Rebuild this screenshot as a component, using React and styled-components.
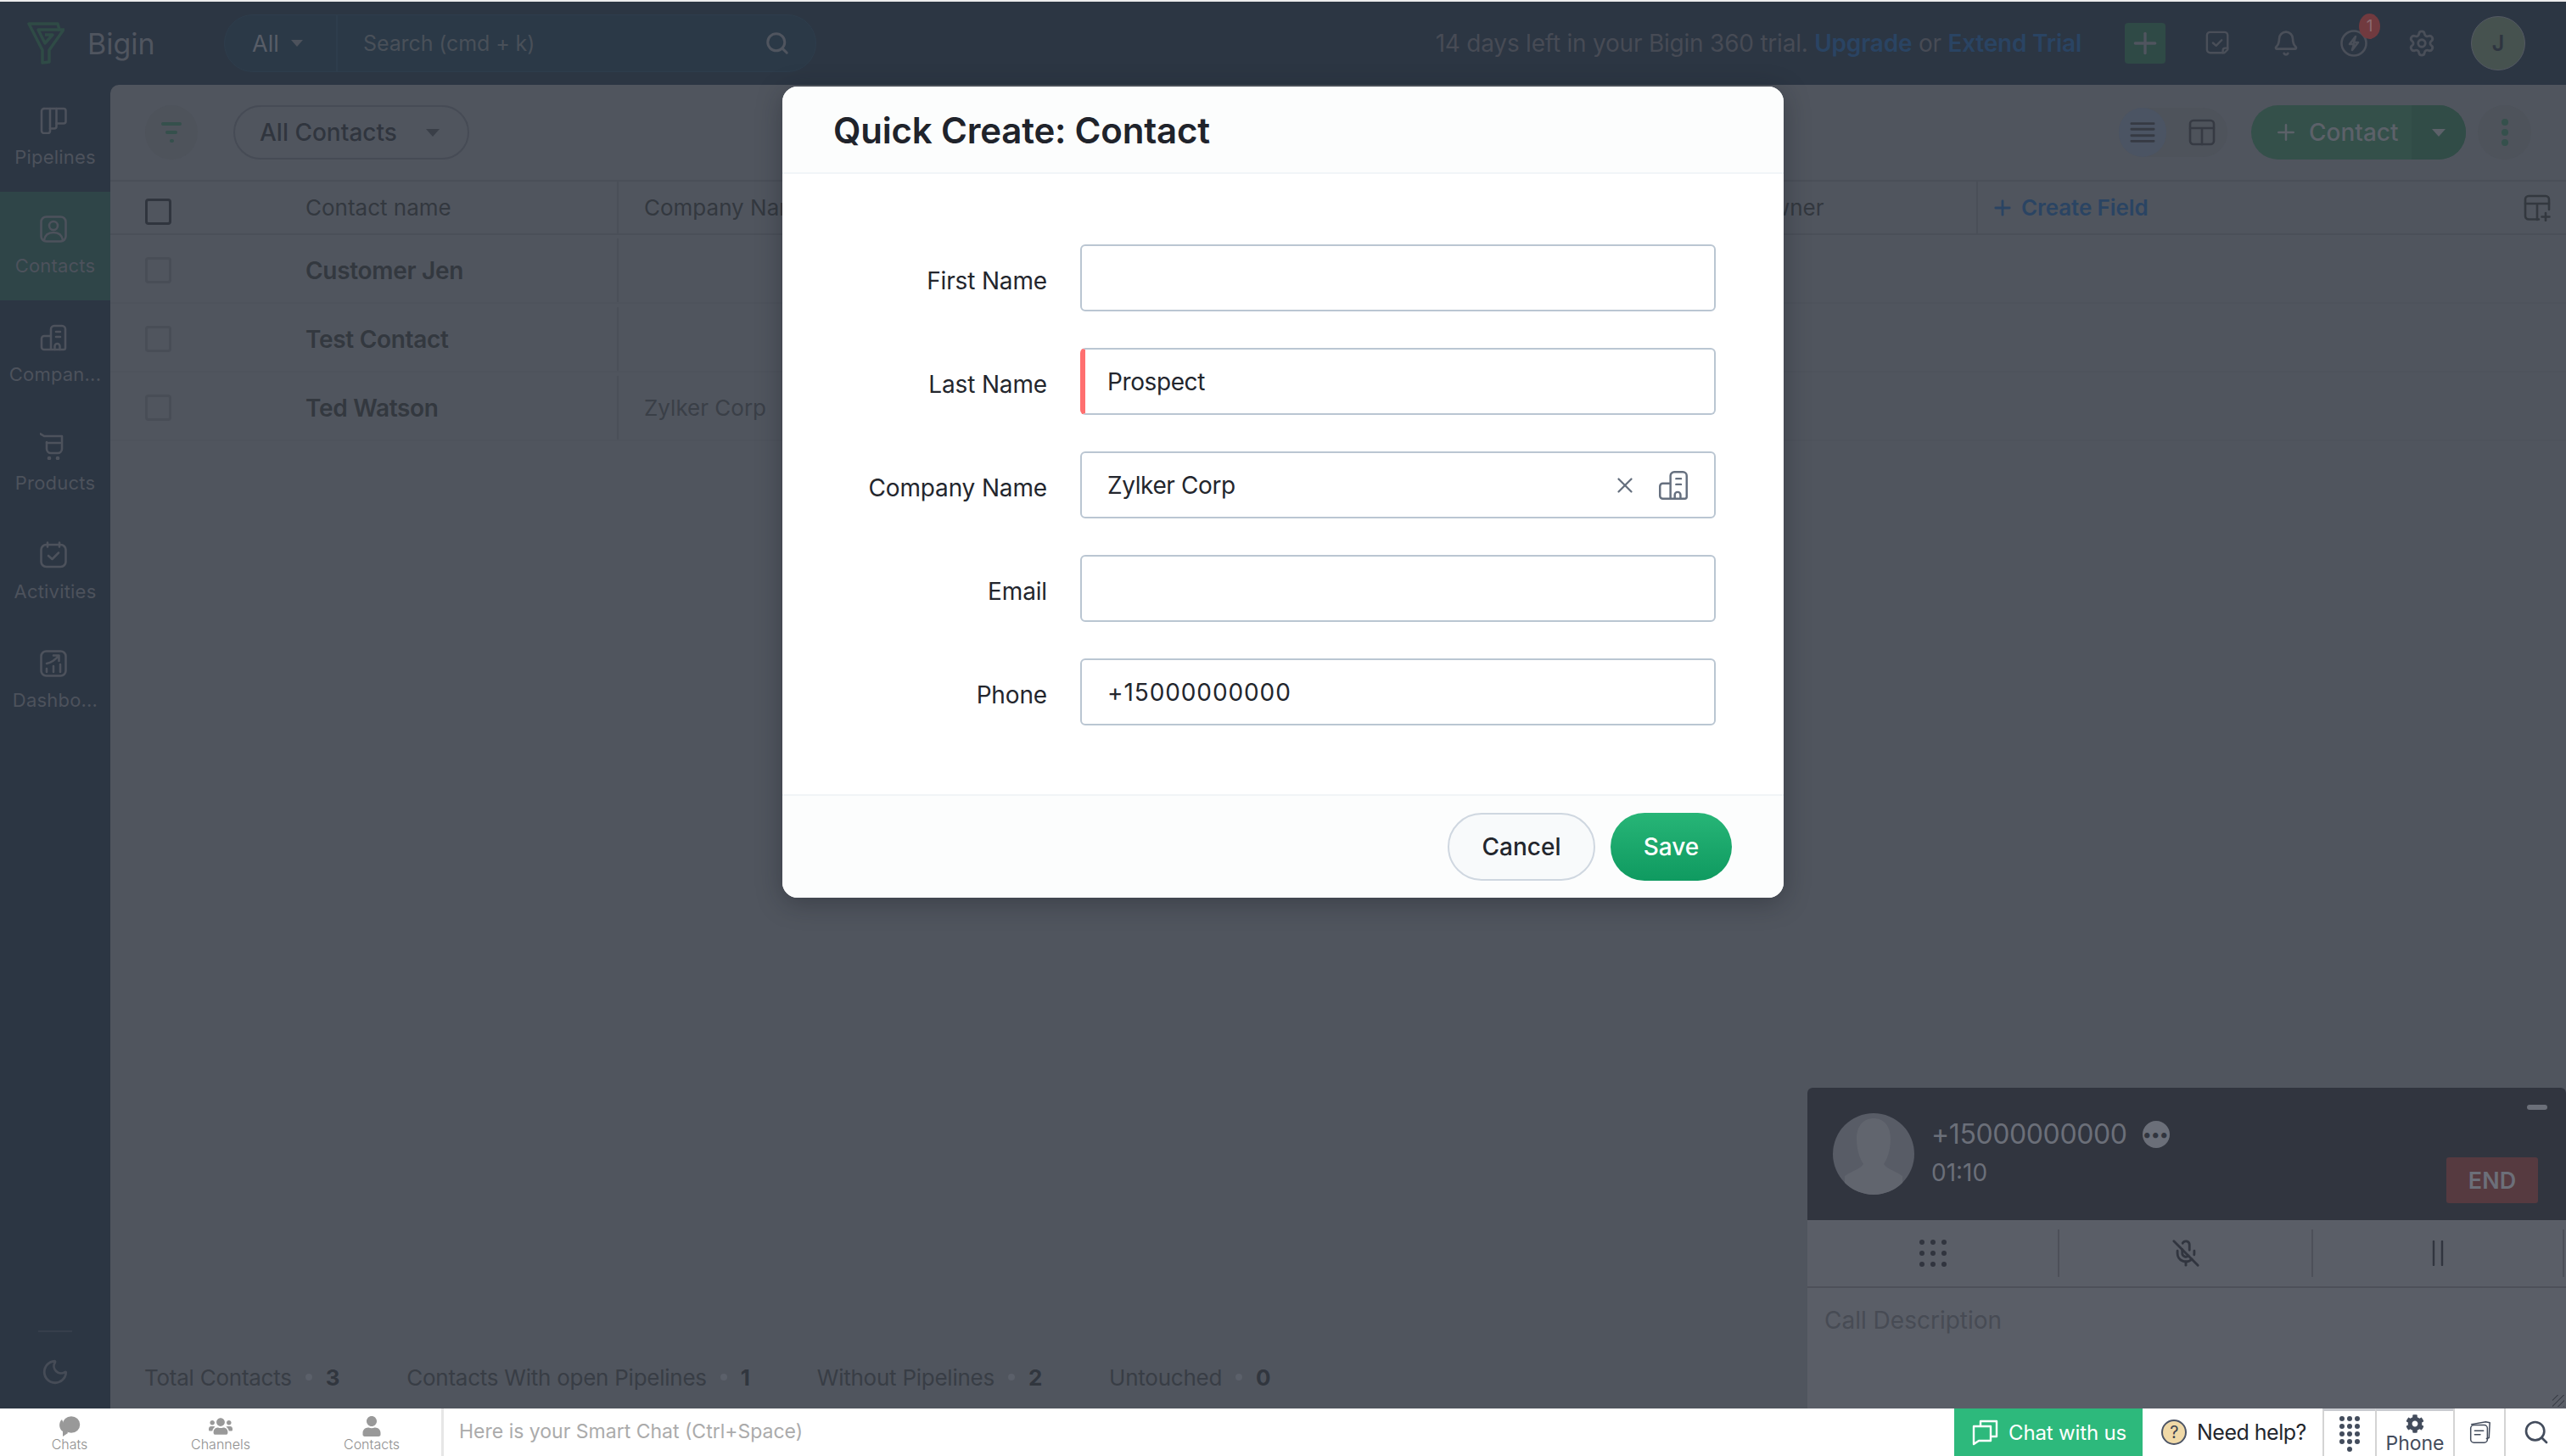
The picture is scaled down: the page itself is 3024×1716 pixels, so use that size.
import React from "react";
import styled, { createGlobalStyle } from "styled-components";
import { Search, Plus, Bell, Settings, X, MicOff, Moon } from "lucide-react";
import { FaCog, FaUser, FaUsers } from "react-icons/fa";

const FONT = `"Inter", "Noto Sans", sans-serif`;

const GlobalStyle = createGlobalStyle`
  html, body { margin: 0; padding: 0; background: #ececec; }
  * { box-sizing: border-box; }
  body { font-family: ${FONT}; }
`;

const Page = styled.div`
  width: 3024px;
  height: 1716px;
  display: flex;
  flex-direction: column;
  overflow: hidden;
  padding-top: 2px;
`;

const Shell = styled.div`
  position: relative;
  flex: 1;
  min-height: 0;
  display: flex;
  flex-direction: column;
  background: #2c3643;
`;

/* top bar */
const TopBar = styled.header`
  height: 98px;
  flex: none;
  display: flex;
  align-items: center;
  background: #2c3643;
`;

const Brand = styled.div`
  width: 264px;
  flex: none;
  display: flex;
  align-items: center;
  padding-left: 32px;
  gap: 27px;
  font-size: 34px;
  color: #50555f;
`;

const SearchBox = styled.div`
  width: 698px;
  height: 68px;
  flex: none;
  display: flex;
  align-items: center;
  border-radius: 34px;
  background: #2b3947;
  border: 1px solid #2e3d4c;
  color: #50555f;
`;

const ScopeCell = styled.div`
  width: 133px;
  height: 100%;
  display: flex;
  align-items: center;
  gap: 14px;
  padding-left: 32px;
  border-right: 2px solid #2e3d4c;
  font-size: 27px;
  color: #585d67;
`;

const SearchText = styled.div`
  flex: 1;
  padding-left: 30px;
  font-size: 25px;
  letter-spacing: -0.1px;
  color: #495059;
`;

const SearchIconWrap = styled.div`
  display: flex;
  padding-right: 30px;
`;

const Caret = styled.span`
  width: 0;
  height: 0;
  border-left: ${(p) => p.size || 8}px solid transparent;
  border-right: ${(p) => p.size || 8}px solid transparent;
  border-top: ${(p) => (p.size || 8) + 1}px solid ${(p) => p.color || "#4d525c"};
`;

const TopRight = styled.div`
  margin-left: auto;
  display: flex;
  align-items: center;
  height: 100%;
`;

const TrialText = styled.div`
  font-size: 28px;
  letter-spacing: -0.22px;
  color: #474b55;
  margin-right: 51px;
  white-space: pre;
`;

const TrialLink = styled.span`
  color: #2a4463;
  font-weight: 600;
`;

const GreenSquare = styled.div`
  width: 48px;
  height: 48px;
  border-radius: 4px;
  background: #2f4a46;
  display: flex;
  align-items: center;
  justify-content: center;
  color: #50555f;
  margin-right: 22px;
`;

const TopIcon = styled.div`
  position: relative;
  width: 80px;
  display: flex;
  justify-content: center;
  color: #4a4f59;
`;

const Badge = styled.span`
  position: absolute;
  top: -19px;
  left: 46px;
  width: 25px;
  height: 30px;
  border-radius: 50%;
  background: #713a3f;
  color: #8b6a70;
  font-size: 19px;
  line-height: 30px;
  text-align: center;
`;

const AvatarJ = styled.div`
  width: 64px;
  height: 64px;
  border-radius: 50%;
  background: #46524f;
  border: 1px solid #545963;
  color: #2e3540;
  font-size: 25px;
  font-weight: 600;
  display: flex;
  align-items: center;
  justify-content: center;
  margin-left: 18px;
  margin-right: 48px;
`;

/* body */
const Body = styled.div`
  flex: 1;
  min-height: 0;
  display: flex;
`;

const Sidebar = styled.nav`
  position: relative;
  width: 130px;
  flex: none;
  margin-top: -2px;
  display: flex;
  flex-direction: column;
  background: #2c3643;
`;

const NavItem = styled.div`
  height: 128px;
  padding-top: 28px;
  display: flex;
  flex-direction: column;
  align-items: center;
  gap: 12px;
  background: ${(p) => (p.$active ? "#2f4548" : "transparent")};
  color: #4d525c;
  font-size: 22px;
  line-height: 30px;
  letter-spacing: 0.2px;
`;

const NavIcon = styled.span`
  display: flex;
  margin-right: 4px;
`;

const NavRule = styled.div`
  width: 40px;
  height: 2px;
  background: #363e4b;
`;

const MoonWrap = styled.div`
  display: flex;
  justify-content: center;
  color: #464c57;
  margin-top: 30px;
`;

const SideBottom = styled.div`
  margin-top: auto;
  padding-bottom: 26px;
  display: flex;
  flex-direction: column;
  align-items: center;
`;

const Main = styled.main`
  flex: 1;
  min-width: 0;
  display: flex;
  flex-direction: column;
  background: #50555e;
  border-top-left-radius: 10px;
`;

const Toolbar = styled.div`
  height: 112px;
  flex: none;
  display: flex;
  align-items: center;
  padding: 0 41px;
`;

const RoundGhost = styled.div`
  width: 62px;
  height: 64px;
  border-radius: 50%;
  background: #4e535b;
  display: flex;
  flex-direction: column;
  align-items: center;
  justify-content: center;
  gap: 6px;
`;

const FilterLine = styled.span`
  height: 4px;
  width: ${(p) => p.$w}px;
  border-radius: 2px;
  background: #35504c;
`;

const ViewPill = styled.div`
  margin-left: 42px;
  width: 278px;
  height: 64px;
  border-radius: 32px;
  border: 2px solid #464b55;
  display: flex;
  align-items: center;
  padding-left: 29px;
  gap: 34px;
  font-size: 28px;
  font-weight: 500;
  color: #30353e;
`;

const ToolRight = styled.div`
  margin-left: auto;
  display: flex;
  align-items: center;
`;

const ViewSwitch = styled.div`
  display: flex;
  width: 128px;
  height: 58px;
  border-radius: 29px;
  background: #4e535b;
  margin-right: 28px;
`;

const ViewOption = styled.div`
  width: ${(p) => (p.$on ? 56 : 72)}px;
  height: 100%;
  border-radius: 28px;
  padding-left: ${(p) => (p.$on ? 0 : 12)}px;
  background: ${(p) => (p.$on ? "#4b5463" : "transparent")};
  display: flex;
  align-items: center;
  justify-content: center;
  color: #363a43;
`;

const ContactButton = styled.div`
  width: 253px;
  height: 64px;
  border-radius: 32px;
  overflow: hidden;
  display: flex;
  background: #34504a;
  color: #5c6169;
  font-size: 28px;
  font-weight: 500;
`;

const ContactMain = styled.div`
  width: 189px;
  display: flex;
  align-items: center;
  padding-left: 26px;
  gap: 12px;
`;

const ContactDrop = styled.div`
  flex: 1;
  background: #314c47;
  display: flex;
  align-items: center;
  justify-content: center;
`;

const MoreButton = styled.div`
  width: 63px;
  height: 64px;
  margin-left: 14px;
  border-radius: 50%;
  background: #4e535b;
  display: flex;
  flex-direction: column;
  align-items: center;
  justify-content: center;
  gap: 4px;
`;

const MoreDot = styled.span`
  width: 8px;
  height: 8px;
  border-radius: 50%;
  background: #35504c;
`;

const TableRow = styled.div`
  display: grid;
  grid-template-columns: 230px 369px 1301px 301px 1fr;
  height: ${(p) => (p.$head ? 65 : 81)}px;
  padding-top: ${(p) => (p.$head ? 0 : 4)}px;
  align-items: center;
  border-top: ${(p) => (p.$head ? "2px solid #4a4f58" : "0")};
  border-bottom: 2px solid ${(p) => (p.$head ? "#4a4f58" : "#4e535c")};
  color: #33383f;
`;

const Cell = styled.div`
  height: 100%;
  display: flex;
  align-items: center;
  font-size: ${(p) => (p.$bold ? 28 : 26)}px;
  font-weight: ${(p) => (p.$bold ? 600 : 400)};
  letter-spacing: ${(p) => (p.$bold ? -0.3 : 0)}px;
  padding-left: ${(p) => p.$pl || 0}px;
  border-right: ${(p) => (p.$rule ? "2px solid #4a4f58" : "0")};
  color: ${(p) => p.$color || "inherit"};
  white-space: nowrap;
`;

const Check = styled.span`
  width: 31px;
  height: 31px;
  border-radius: 4px;
  border: 3px solid ${(p) => (p.$strong ? "#30353e" : "#484d56")};
  margin-left: 41px;
  margin-top: ${(p) => (p.$strong ? 10 : 0)}px;
`;

const CreateField = styled.div`
  flex: 1;
  display: flex;
  align-items: center;
  gap: 8px;
  color: #2a4463;
  font-weight: 600;
  letter-spacing: -0.1px;
  padding-right: 18px;
`;

const TailIcon = styled.div`
  margin-left: auto;
  display: flex;
  color: #33383f;
`;

const StatusBar = styled.div`
  margin-top: auto;
  height: 74px;
  flex: none;
  display: flex;
  align-items: center;
  padding-left: 40px;
  gap: 79px;
  font-size: 26px;
  letter-spacing: -0.25px;
  color: #383d45;
`;

const Stat = styled.div`
  display: flex;
  align-items: center;
  gap: 16px;
`;

const StatDot = styled.span`
  width: 8px;
  height: 8px;
  border-radius: 50%;
  background: #5b606a;
`;

const StatValue = styled.b`
  font-weight: 700;
  color: #31363e;
`;

/* quick create modal */
const Overlay = styled.div`
  position: absolute;
  inset: 0;
  display: flex;
  justify-content: center;
  align-items: flex-start;
  padding-top: 100px;
`;

const Modal = styled.section`
  width: 1180px;
  height: 956px;
  border-radius: 18px;
  overflow: hidden;
  background: #fff;
  display: flex;
  flex-direction: column;
  box-shadow: 0 6px 30px rgba(20, 24, 32, 0.35);
`;

const ModalHeader = styled.div`
  height: 103px;
  flex: none;
  display: flex;
  align-items: center;
  padding: 2px 0 0 60px;
  background: #fcfdfd;
  border-bottom: 2px solid #f1f5f8;
  font-size: 42px;
  font-weight: 600;
  letter-spacing: -0.2px;
  color: #20232b;
`;

const ModalBody = styled.div`
  flex: 1;
  padding-top: 83px;
  display: flex;
  flex-direction: column;
  gap: 43px;
`;

const FormRow = styled.div`
  display: flex;
  align-items: center;
  height: 79px;
`;

const FieldLabel = styled.div`
  width: 312px;
  text-align: right;
  font-size: 28px;
  letter-spacing: -0.15px;
  color: #23262d;
  position: relative;
  top: 3px;
`;

const Field = styled.div`
  width: 749px;
  height: 79px;
  margin-left: 39px;
  border-radius: 6px;
  border: 2px solid #bac6d2;
  border-left: ${(p) => (p.$required ? "6px solid #ff6f6f" : "2px solid #bac6d2")};
  padding-left: ${(p) => (p.$required ? 26 : 30)}px;
  padding-right: 30px;
  display: flex;
  align-items: center;
  font-size: 28px;
  letter-spacing: ${(p) => (p.$digits ? 0.9 : -0.4)}px;
  color: #23262d;
`;

const FieldIcons = styled.div`
  margin-left: auto;
  display: flex;
  align-items: center;
  gap: 24px;
  color: #66707f;
`;

const ModalFooter = styled.div`
  height: 122px;
  flex: none;
  display: flex;
  align-items: center;
  justify-content: flex-end;
  padding-right: 61px;
  gap: 18px;
  background: #fcfdfd;
  border-top: 2px solid #f1f4f7;
`;

const PillButton = styled.div`
  height: 80px;
  border-radius: 40px;
  display: flex;
  align-items: center;
  justify-content: center;
  font-size: 28px;
  font-weight: 500;
  width: ${(p) => p.$w}px;
  color: ${(p) => (p.$primary ? "#fff" : "#23262d")};
  background: ${(p) =>
    p.$primary ? "linear-gradient(#27b577, #0f9a60)" : "#f8fafb"};
  border: ${(p) => (p.$primary ? "0" : "2px solid #cfd7e0")};
`;

/* call widget */
const CallPanel = styled.aside`
  position: absolute;
  right: 0;
  bottom: 0;
  width: 894px;
  height: 378px;
  background: #5a5e67;
  border-top-left-radius: 6px;
  border-top-right-radius: 6px;
  overflow: hidden;
  display: flex;
  flex-direction: column;
`;

const CallHead = styled.div`
  position: relative;
  height: 156px;
  flex: none;
  background: #31353f;
  display: flex;
  align-items: center;
  padding-left: 30px;
  gap: 20px;
`;

const CallAvatar = styled.div`
  width: 96px;
  height: 96px;
  border-radius: 50%;
  background: #585c66;
  overflow: hidden;
  display: flex;
  justify-content: center;
`;

const CallInfo = styled.div`
  display: flex;
  flex-direction: column;
  gap: 8px;
  margin-bottom: 5px;
  color: #6b6f79;
`;

const CallNumber = styled.div`
  display: flex;
  align-items: center;
  gap: 18px;
  font-size: 32px;
  letter-spacing: -0.4px;
  line-height: 40px;
`;

const CallMoreDots = styled.span`
  width: 32px;
  height: 32px;
  border-radius: 50%;
  background: #6b6f79;
  color: #31353f;
  display: flex;
  align-items: center;
  justify-content: center;
  font-size: 20px;
  font-weight: 700;
  line-height: 1;
  letter-spacing: 0.5px;
`;

const CallTime = styled.div`
  font-size: 28px;
  line-height: 34px;
`;

const Minimize = styled.span`
  position: absolute;
  top: 20px;
  right: 22px;
  width: 24px;
  height: 6px;
  border-radius: 3px;
  background: #6b6f79;
`;

const EndButton = styled.div`
  position: absolute;
  left: 753px;
  top: 82px;
  width: 108px;
  height: 54px;
  border-radius: 3px;
  background: #563a40;
  color: #6c6f79;
  font-size: 27px;
  font-weight: 600;
  display: flex;
  align-items: center;
  justify-content: center;
`;

const CallActions = styled.div`
  height: 80px;
  flex: none;
  display: flex;
  align-items: center;
  border-bottom: 2px solid #4d5059;
  color: #31353f;
`;

const CallAction = styled.div`
  width: ${(p) => p.$w}px;
  height: 56px;
  display: flex;
  align-items: center;
  justify-content: center;
  border-right: 2px solid #4d5059;
`;

const CallNote = styled.div`
  padding: 21px 20px;
  font-size: 28px;
  color: #474b54;
`;

const Grip = styled.span`
  position: absolute;
  right: 2px;
  bottom: 2px;
  width: 14px;
  height: 14px;
  background: repeating-linear-gradient(135deg, transparent 0 4px, #41454e 4px 5px);
`;

/* chat bar */
const BottomBar = styled.footer`
  height: 56px;
  flex: none;
  display: flex;
  align-items: stretch;
  background: #fff;
`;

const ChatTabs = styled.div`
  width: 520px;
  flex: none;
  display: flex;
  padding-left: 0;
  margin-left: 0;
`;

const ChatTab = styled.div`
  width: 178px;
  flex: none;
  margin-left: ${(p) => p.$ml || 0}px;
  display: flex;
  flex-direction: column;
  align-items: center;
  padding-top: 9px;
  color: #8f8f8f;
  font-size: 16px;
  line-height: 18px;
  font-weight: 300;
`;

const TabIcon = styled.div`
  height: 24px;
  display: flex;
  align-items: center;
  color: #999;
`;

const ChatInput = styled.div`
  flex: 1;
  padding-left: 18px;
  padding-bottom: 3px;
  border-left: 3px solid #e6e6e6;
  display: flex;
  align-items: center;
  font-size: 23px;
  color: #ababab;
`;

const ChatWithUs = styled.div`
  width: 222px;
  flex: none;
  background: #2db97c;
  color: #fff;
  display: flex;
  align-items: center;
  gap: 12px;
  padding-left: 20px;
  font-size: 24px;
  letter-spacing: -0.15px;
`;

const NeedHelp = styled.div`
  width: 212px;
  flex: none;
  display: flex;
  align-items: center;
  gap: 12px;
  padding-left: 22px;
  font-size: 25px;
  letter-spacing: -0.5px;
  color: #23262d;
`;

const HelpMark = styled.span`
  width: 30px;
  height: 30px;
  border-radius: 50%;
  border: 2px solid #4d5566;
  background: #f0d9a7;
  color: #3c4350;
  font-size: 20px;
  display: flex;
  align-items: center;
  justify-content: center;
`;

const BarCell = styled.div`
  width: ${(p) => p.$w}px;
  flex: none;
  display: flex;
  flex-direction: column;
  align-items: center;
  justify-content: center;
  border-left: 2px solid #d4d4d4;
  border-top: ${(p) => (p.$top ? "3px solid #c8cbd0" : "0")};
  color: #434c5c;
  font-size: 23px;
  line-height: 24px;
`;

const DialGrid = styled.div`
  display: grid;
  grid-template-columns: repeat(3, 6px);
  gap: ${(p) => p.$gap || 3}px;
`;

const DialDot = styled.span`
  width: 6px;
  height: 6px;
  border-radius: 50%;
  background: currentColor;
  grid-column: ${(p) => p.$col || "auto"};
`;

/* drawings */
const Glyph = ({ size = 32, w, h, sw = 2.6, vb = "0 0 32 32", children }) => (
  <svg
    width={w || size}
    height={h || size}
    viewBox={vb}
    fill="none"
    stroke="currentColor"
    strokeWidth={sw}
    strokeLinecap="round"
    strokeLinejoin="round"
  >
    {children}
  </svg>
);

const LogoMark = () => (
  <svg width="44" height="50" viewBox="0 0 44 50" fill="none" stroke="#2f4b46" strokeWidth="3.5" strokeLinejoin="round">
    <path d="M2 2H36L38 9H43L26 33V47L18 48V33Z" />
    <path d="M38 9H13L21 25L30 15H21" />
  </svg>
);

const PipelinesIcon = () => (
  <Glyph>
    <path d="M5 2h23a2.5 2.5 0 0 1 2.5 2.5V17a2.5 2.5 0 0 1-2.5 2.5h-8.5" />
    <path d="M19.5 2v21a2.5 2.5 0 0 1-2.5 2.5h-5" />
    <path d="M12 2v26.5a2.5 2.5 0 0 1-2.5 2.5H5a3 3 0 0 1-3-3V5a3 3 0 0 1 3-3" />
  </Glyph>
);

const ContactIcon = () => (
  <Glyph>
    <rect x="1.5" y="1.5" width="29" height="29" rx="6" />
    <circle cx="16" cy="12" r="5" />
    <path d="M5 29c1-6 5-9 11-9s10 3 11 9" />
  </Glyph>
);

const CompanyIcon = ({ size = 32, sw = 2.6 }) => (
  <Glyph size={size} sw={sw}>
    <path d="M13 30V6a4 4 0 0 1 4-4h9a4 4 0 0 1 4 4v22a2 2 0 0 1-2 2H5a3 3 0 0 1-3-3V17a3 3 0 0 1 3-3h8" />
    <path d="M19 9h5M19 15h5" />
    <path d="M17.5 30v-4a3 3 0 0 1 6 0v4" />
  </Glyph>
);

const ProductIcon = () => (
  <Glyph>
    <path d="M2 1l5 3h21v15a5 5 0 0 1-5 5h-8a5 5 0 0 1-5-5V11" transform="translate(-2 0)" />
    <path d="M8 12h16" />
    <circle cx="11" cy="30" r="1" />
    <circle cx="21" cy="30" r="1" />
  </Glyph>
);

const ActivityIcon = () => (
  <Glyph>
    <rect x="1.5" y="4" width="29" height="26" rx="6" />
    <path d="M9 1.5v5M23 1.5v5" />
    <path d="M10 17l4.5 4L22 13.5" />
  </Glyph>
);

const DashboardIcon = () => (
  <Glyph>
    <rect x="1.5" y="1.5" width="29" height="29" rx="6" />
    <path d="M8 26v-4M16 26v-7M24 26v-9" />
    <path d="M8 16c5-1 9-3 14-9M16 6.5h6.5V13" />
  </Glyph>
);

const TaskIcon = () => (
  <Glyph size={30} sw={2.6}>
    <path d="M6 2h18a4 4 0 0 1 4 4v18l-4 4H6a4 4 0 0 1-4-4V6a4 4 0 0 1 4-4z" />
    <path d="M9.5 15.5l4 3.5 7-7" />
    <path d="M28 22h-3a3 3 0 0 0-3 3v3" />
  </Glyph>
);

const BoltRing = () => (
  <Glyph>
    <circle cx="16" cy="16" r="14.5" />
    <path d="M18 8l-7 9h5l-2 7 7-9h-5z" />
  </Glyph>
);

const TableIcon = ({ add }) => (
  <Glyph size={32} sw={2.6}>
    <path d={add ? "M18 29.5H6a4 4 0 0 1-4-4V6a4 4 0 0 1 4-4h20a4 4 0 0 1 4 4v12" : "M6 2h20a4 4 0 0 1 4 4v20a4 4 0 0 1-4 4H6a4 4 0 0 1-4-4V6a4 4 0 0 1 4-4z"} />
    <path d="M2 11h28M16 11v19" />
    {add && <path d="M26 22v9M21.5 26.5h9" />}
  </Glyph>
);

const ListIcon = () => (
  <Glyph size={30} sw={3}>
    <path d="M2 5h28M2 12h28M2 20h28M2 27h28" />
  </Glyph>
);

const ChatsGlyph = () => (
  <svg width="30" height="26" viewBox="0 0 30 26" fill="#999">
    <ellipse cx="17" cy="11" rx="11" ry="10.5" stroke="#fff" strokeWidth="1.5" />
    <path d="M6 5C2 8 2 16 7 19l0 6 6-4z" />
  </svg>
);

const ChatOutline = () => (
  <Glyph w={32} h={32} sw={2.4}>
    <path d="M11 8V3h19v18h-6" />
    <path d="M3 9h20v17H9l-6 4z" />
  </Glyph>
);

const PaperStack = () => (
  <Glyph size={30} sw={1.6}>
    <path d="M6 6l18-3 5 1-1 19-3 1" />
    <rect x="5" y="7" width="21" height="22" rx="4" />
    <path d="M10 14h11M10 19h7" />
  </Glyph>
);

const contacts = [
  { name: "Customer Jen" },
  { name: "Test Contact" },
  { name: "Ted Watson", company: "Zylker Corp" },
];

const navItems = [
  { label: "Pipelines", icon: <PipelinesIcon /> },
  { label: "Contacts", icon: <ContactIcon />, active: true },
  { label: "Compan...", icon: <CompanyIcon /> },
  { label: "Products", icon: <ProductIcon /> },
  { label: "Activities", icon: <ActivityIcon /> },
  { label: "Dashbo...", icon: <DashboardIcon /> },
];

const stats = [
  ["Total Contacts", 3],
  ["Contacts With open Pipelines", 1],
  ["Without Pipelines", 2],
  ["Untouched", 0],
];

export default function App() {
  return (
    <Page>
      <GlobalStyle />
      <Shell>
        <TopBar>
          <Brand>
            <LogoMark />
            Bigin
          </Brand>
          <SearchBox>
            <ScopeCell>
              All
              <Caret size={7} />
            </ScopeCell>
            <SearchText>Search (cmd + k)</SearchText>
            <SearchIconWrap>
              <Search size={30} strokeWidth={2.4} />
            </SearchIconWrap>
          </SearchBox>
          <TopRight>
            <TrialText>
              14 days left in your Bigin 360 trial. <TrialLink>Upgrade</TrialLink> or{" "}
              <TrialLink>Extend Trial</TrialLink>
            </TrialText>
            <GreenSquare>
              <Plus size={40} strokeWidth={2} />
            </GreenSquare>
            <TopIcon>
              <TaskIcon />
            </TopIcon>
            <TopIcon>
              <Bell size={32} strokeWidth={2} />
            </TopIcon>
            <TopIcon>
              <BoltRing />
              <Badge>1</Badge>
            </TopIcon>
            <TopIcon>
              <Settings size={34} strokeWidth={2} />
            </TopIcon>
            <AvatarJ>J</AvatarJ>
          </TopRight>
        </TopBar>

        <Body>
          <Sidebar>
            {navItems.map((item) => (
              <NavItem key={item.label} $active={item.active}>
                <NavIcon>{item.icon}</NavIcon>
                {item.label}
              </NavItem>
            ))}
            <SideBottom>
              <NavRule />
              <MoonWrap>
                <Moon size={34} strokeWidth={2} />
              </MoonWrap>
            </SideBottom>
          </Sidebar>

          <Main>
            <Toolbar>
              <RoundGhost>
                <FilterLine $w={24} />
                <FilterLine $w={14} />
                <FilterLine $w={5} />
              </RoundGhost>
              <ViewPill>
                All Contacts
                <Caret size={8} color="#3a3f48" />
              </ViewPill>
              <ToolRight>
                <ViewSwitch>
                  <ViewOption $on>
                    <ListIcon />
                  </ViewOption>
                  <ViewOption>
                    <TableIcon />
                  </ViewOption>
                </ViewSwitch>
                <ContactButton>
                  <ContactMain>
                    <Plus size={30} strokeWidth={2} />
                    Contact
                  </ContactMain>
                  <ContactDrop>
                    <Caret size={8} color="#5c6169" />
                  </ContactDrop>
                </ContactButton>
                <MoreButton>
                  <MoreDot />
                  <MoreDot />
                  <MoreDot />
                </MoreButton>
              </ToolRight>
            </Toolbar>

            <TableRow $head>
              <Cell>
                <Check $strong />
              </Cell>
              <Cell $rule>Contact name</Cell>
              <Cell $pl={30}>Company Name</Cell>
              <Cell $pl={38} $rule>Owner</Cell>
              <Cell $pl={15}>
                <CreateField>
                  <Plus size={28} strokeWidth={2.4} />
                  Create Field
                  <TailIcon>
                    <TableIcon add />
                  </TailIcon>
                </CreateField>
              </Cell>
            </TableRow>
            {contacts.map((c) => (
              <TableRow key={c.name}>
                <Cell>
                  <Check />
                </Cell>
                <Cell $bold $rule>{c.name}</Cell>
                <Cell $pl={30} $color="#3a3f47">{c.company}</Cell>
                <Cell />
                <Cell />
              </TableRow>
            ))}

            <StatusBar>
              {stats.map(([label, value]) => (
                <Stat key={label}>
                  {label}
                  <StatDot />
                  <StatValue>{value}</StatValue>
                </Stat>
              ))}
            </StatusBar>
          </Main>
        </Body>

        <CallPanel>
          <CallHead>
            <CallAvatar>
              <svg width="96" height="96" viewBox="0 0 96 96" fill="#61656e">
                <path d="M28 30c0-16 9-24 20-24s20 8 20 24c0 14-4 24-8 30 4 6 14 8 22 14v22H14V74c8-6 18-8 22-14-4-6-8-16-8-30z" />
              </svg>
            </CallAvatar>
            <CallInfo>
              <CallNumber>
                +15000000000
                <CallMoreDots>•••</CallMoreDots>
              </CallNumber>
              <CallTime>01:10</CallTime>
            </CallInfo>
            <Minimize />
            <EndButton>END</EndButton>
          </CallHead>
          <CallActions>
            <CallAction $w={297}>
              <DialGrid $gap={7}>
                {Array.from({ length: 9 }, (_, i) => (
                  <DialDot key={i} />
                ))}
              </DialGrid>
            </CallAction>
            <CallAction $w={299}>
              <MicOff size={34} strokeWidth={2} />
            </CallAction>
            <CallAction $w={296}>
              <Glyph w={20} h={30} vb="0 0 20 30" sw={2.4}>
                <path d="M5 1v28M15 1v28" />
              </Glyph>
            </CallAction>
          </CallActions>
          <CallNote>Call Description</CallNote>
          <Grip />
        </CallPanel>

        <Overlay>
          <Modal>
            <ModalHeader>Quick Create: Contact</ModalHeader>
            <ModalBody>
              <FormRow>
                <FieldLabel>First Name</FieldLabel>
                <Field />
              </FormRow>
              <FormRow>
                <FieldLabel>Last Name</FieldLabel>
                <Field $required>Prospect</Field>
              </FormRow>
              <FormRow>
                <FieldLabel>Company Name</FieldLabel>
                <Field>
                  Zylker Corp
                  <FieldIcons>
                    <X size={30} strokeWidth={1.8} />
                    <CompanyIcon size={36} sw={2.2} />
                  </FieldIcons>
                </Field>
              </FormRow>
              <FormRow>
                <FieldLabel>Email</FieldLabel>
                <Field />
              </FormRow>
              <FormRow>
                <FieldLabel>Phone</FieldLabel>
                <Field $digits>+15000000000</Field>
              </FormRow>
            </ModalBody>
            <ModalFooter>
              <PillButton $w={174}>Cancel</PillButton>
              <PillButton $w={143} $primary>
                Save
              </PillButton>
            </ModalFooter>
          </Modal>
        </Overlay>
      </Shell>

      <BottomBar>
        <ChatTabs>
          <ChatTab $ml={-7}>
            <TabIcon>
              <ChatsGlyph />
            </TabIcon>
            Chats
          </ChatTab>
          <ChatTab>
            <TabIcon>
              <FaUsers size={28} />
            </TabIcon>
            Channels
          </ChatTab>
          <ChatTab>
            <TabIcon>
              <FaUser size={24} />
            </TabIcon>
            Contacts
          </ChatTab>
        </ChatTabs>
        <ChatInput>Here is your Smart Chat (Ctrl+Space)</ChatInput>
        <ChatWithUs>
          <ChatOutline />
          Chat with us
        </ChatWithUs>
        <NeedHelp>
          <HelpMark>?</HelpMark>
          Need help?
        </NeedHelp>
        <BarCell $w={62} $top>
          <DialGrid>
            {Array.from({ length: 12 }, (_, i) => (
              <DialDot key={i} />
            ))}
            <DialDot $col="2" />
          </DialGrid>
        </BarCell>
        <BarCell $w={92} $top>
          <FaCog size={22} />
          Phone
        </BarCell>
        <BarCell $w={60}>
          <PaperStack />
        </BarCell>
        <BarCell $w={73}>
          <Search size={32} strokeWidth={2} />
        </BarCell>
      </BottomBar>
    </Page>
  );
}
